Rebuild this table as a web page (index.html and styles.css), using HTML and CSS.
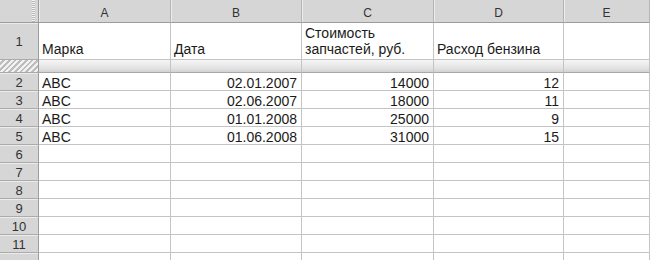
FILE: index.html
```html
<!DOCTYPE html>
<html lang="ru">
<head>
    <meta charset="UTF-8">
    <meta name="viewport" content="width=device-width, initial-scale=1.0">
    <link rel="stylesheet" href="styles.css">
    <title>Расход бензина</title>
</head>
<body>
    <div class="sheet">
        <!-- column headers -->
        <div class="corner"><span class="split"></span></div>
        <div class="colhead">A</div>
        <div class="colhead">B</div>
        <div class="colhead">C</div>
        <div class="colhead">D</div>
        <div class="colhead">E</div>

        <!-- row 1: titles -->
        <div class="rowhead tall">1</div>
        <div class="cell tall">Марка</div>
        <div class="cell tall">Дата</div>
        <div class="cell tall">Стоимость<br>запчастей, руб.</div>
        <div class="cell tall">Расход бензина</div>
        <div class="cell tall"></div>

        <!-- frozen pane divider -->
        <div class="freeze hatch"></div>
        <div class="freeze"></div>
        <div class="freeze"></div>
        <div class="freeze"></div>
        <div class="freeze"></div>
        <div class="freeze"></div>

        <div class="rowhead">2</div>
        <div class="cell">ABC</div>
        <div class="cell num">02.01.2007</div>
        <div class="cell num">14000</div>
        <div class="cell num">12</div>
        <div class="cell"></div>

        <div class="rowhead">3</div>
        <div class="cell">ABC</div>
        <div class="cell num">02.06.2007</div>
        <div class="cell num">18000</div>
        <div class="cell num">11</div>
        <div class="cell"></div>

        <div class="rowhead">4</div>
        <div class="cell">ABC</div>
        <div class="cell num">01.01.2008</div>
        <div class="cell num">25000</div>
        <div class="cell num">9</div>
        <div class="cell"></div>

        <div class="rowhead">5</div>
        <div class="cell">ABC</div>
        <div class="cell num">01.06.2008</div>
        <div class="cell num">31000</div>
        <div class="cell num">15</div>
        <div class="cell"></div>

        <div class="rowhead">6</div>
        <div class="cell"></div><div class="cell"></div><div class="cell"></div><div class="cell"></div><div class="cell"></div>
        <div class="rowhead">7</div>
        <div class="cell"></div><div class="cell"></div><div class="cell"></div><div class="cell"></div><div class="cell"></div>
        <div class="rowhead">8</div>
        <div class="cell"></div><div class="cell"></div><div class="cell"></div><div class="cell"></div><div class="cell"></div>
        <div class="rowhead">9</div>
        <div class="cell"></div><div class="cell"></div><div class="cell"></div><div class="cell"></div><div class="cell"></div>
        <div class="rowhead">10</div>
        <div class="cell"></div><div class="cell"></div><div class="cell"></div><div class="cell"></div><div class="cell"></div>
        <div class="rowhead">11</div>
        <div class="cell"></div><div class="cell"></div><div class="cell"></div><div class="cell"></div><div class="cell"></div>
        <!-- next row only peeks in at the bottom edge -->
        <div class="rowhead"></div>
        <div class="cell"></div><div class="cell"></div><div class="cell"></div><div class="cell"></div><div class="cell"></div>
    </div>
</body>
</html>
```

FILE: styles.css
```css
html, body{
    margin: 0;
    background: #fff;
    overflow: hidden;
}
.sheet{
    display: grid;
    grid-template-columns: 39px 132px 131px 132px 130px 1fr;
    grid-template-rows: 23px 37px 13px;
    grid-auto-rows: 18px;
    width: 650px;
    height: 260px;
    overflow: hidden;
    font-family: "Liberation Sans", Arial, sans-serif;
    font-size: 14px;
    color: #1a1a1a;
}
.corner{
    background: #d6d6d6;
    border-right: 1px solid #9c9c9c;
    border-bottom: 1px solid #9c9c9c;
    position: relative;
}
.split{
    position: absolute;
    left: 32px;
    top: 0;
    width: 3px;
    height: 22px;
    background: repeating-linear-gradient(180deg, #f4f4f4 0 1px, #b8b8b8 1px 2px);
}
.colhead{
    background: #d6d6d6;
    border-right: 1px solid #b4b4b4;
    border-bottom: 1px solid #9c9c9c;
    box-shadow: inset 1px 0 0 #ececec;
    display: flex;
    align-items: center;
    justify-content: center;
    padding-top: 3px;
    font-size: 12px;
    color: #333;
}
.rowhead{
    background: #d6d6d6;
    border-right: 1px solid #9c9c9c;
    border-bottom: 1px solid #ababab;
    box-shadow: inset 0 1px 0 #ececec;
    display: flex;
    align-items: center;
    justify-content: center;
    padding-top: 1px;
    font-size: 13px;
    color: #333;
}
.cell{
    border-right: 1px solid #c4c4c4;
    border-bottom: 1px solid #c4c4c4;
    padding: 0 3px;
    line-height: 13px;
    display: flex;
    align-items: flex-end;
    white-space: nowrap;
}
.cell.num{
    justify-content: flex-end;
    padding-right: 4px;
}
.cell.tall{
    line-height: 16px;
    padding-bottom: 2px;
}
.freeze{
    background: linear-gradient(180deg, #f6f6f6, #e2e2e2 70%, #d2d2d2);
    border-right: 1px solid #c4c4c4;
    border-bottom: 1px solid #a8a8a8;
}
.freeze.hatch{
    background: repeating-linear-gradient(135deg, #f2f2f2 0 2px, #bdbdbd 2px 4px);
    border-right-color: #9c9c9c;
}
```
